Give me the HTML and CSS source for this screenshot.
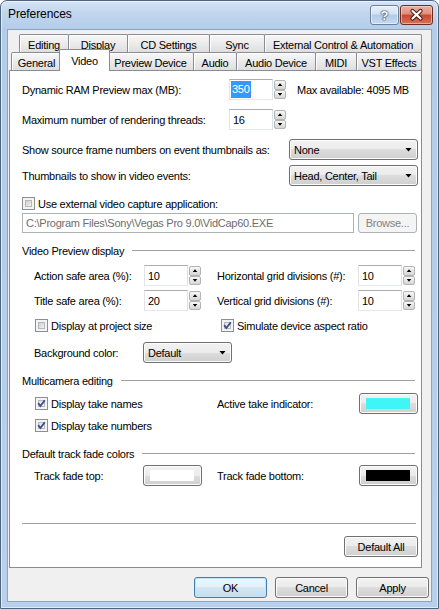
FILE: index.html
```html
<!DOCTYPE html>
<html>
<head>
<meta charset="utf-8">
<title>Preferences</title>
<link rel="stylesheet" href="styles.css">
</head>
<body>
<div class="window">
  <div class="titlebar">
    <span class="title">Preferences</span>
    <div class="caption">
      <div class="cap-btn help"><span>?</span></div>
      <div class="cap-btn close">
        <svg width="31" height="18" viewBox="0 0 31 18"><path d="M11.5 5 L19.5 12.5 M19.5 5 L11.5 12.5" stroke="#4b1610" stroke-width="4.2" stroke-linecap="round"/><path d="M11.5 5 L19.5 12.5 M19.5 5 L11.5 12.5" stroke="#fff" stroke-width="2.2" stroke-linecap="round"/></svg>
      </div>
    </div>
  </div>
  <div class="client">
    <div class="tabs">
      <div class="tabrow back">
        <div class="tab w-editing">Editing</div>
        <div class="tab w-display">Display</div>
        <div class="tab w-cd">CD Settings</div>
        <div class="tab w-sync">Sync</div>
        <div class="tab w-ext">External Control &amp; Automation</div>
      </div>
      <div class="tabrow front">
        <div class="tab w-general">General</div>
        <div class="tab sel w-video">Video</div>
        <div class="tab w-preview">Preview Device</div>
        <div class="tab w-audio">Audio</div>
        <div class="tab w-adev">Audio Device</div>
        <div class="tab w-midi">MIDI</div>
        <div class="tab w-vst">VST Effects</div>
      </div>
    </div>
    <div class="panel">
      <div class="row r1">
        <span class="lbl w207">Dynamic RAM Preview max (MB):</span>
        <div class="spinner"><div class="edit"><span class="hl">350</span></div><div class="spin"><div class="sb"><i class="up"></i></div><div class="sb"><i class="down"></i></div></div></div>
        <span class="maxav">Max available: 4095 MB</span>
      </div>
      <div class="row r2">
        <span class="lbl w207">Maximum number of rendering threads:</span>
        <div class="spinner"><div class="edit"><span class="val">16</span></div><div class="spin"><div class="sb"><i class="up"></i></div><div class="sb"><i class="down"></i></div></div></div>
      </div>
      <div class="row r3">
        <span class="lbl w267">Show source frame numbers on event thumbnails as:</span>
        <div class="combo w129"><span>None</span><i class="arrow"></i></div>
      </div>
      <div class="row r4">
        <span class="lbl w267">Thumbnails to show in video events:</span>
        <div class="combo w129"><span>Head, Center, Tail</span><i class="arrow"></i></div>
      </div>
      <div class="row cbrow r5">
        <span class="cb"><i></i></span><span>Use external video capture application:</span>
      </div>
      <div class="row r6">
        <div class="textfield">C:\Program Files\Sony\Vegas Pro 9.0\VidCap60.EXE</div>
        <div class="btn disabled browse">Browse...</div>
      </div>
      <div class="group r7">Video Preview display</div>
      <div class="row sub r8">
        <div class="half left"><span class="lbl w110">Action safe area (%):</span>
          <div class="spinner"><div class="edit"><span class="val">10</span></div><div class="spin"><div class="sb"><i class="up"></i></div><div class="sb"><i class="down"></i></div></div></div>
        </div>
        <div class="half right"><span class="lbl w141">Horizontal grid divisions (#):</span>
          <div class="spinner"><div class="edit"><span class="val">10</span></div><div class="spin"><div class="sb"><i class="up"></i></div><div class="sb"><i class="down"></i></div></div></div>
        </div>
      </div>
      <div class="row sub r9">
        <div class="half left"><span class="lbl w110">Title safe area (%):</span>
          <div class="spinner"><div class="edit"><span class="val">20</span></div><div class="spin"><div class="sb"><i class="up"></i></div><div class="sb"><i class="down"></i></div></div></div>
        </div>
        <div class="half right"><span class="lbl w141">Vertical grid divisions (#):</span>
          <div class="spinner"><div class="edit"><span class="val">10</span></div><div class="spin"><div class="sb"><i class="up"></i></div><div class="sb"><i class="down"></i></div></div></div>
        </div>
      </div>
      <div class="row sub cbrow r10">
        <div class="half left cbl"><span class="cb"><i></i></span><span>Display at project size</span></div>
        <div class="half right cbr"><span class="cb checked"><i></i><svg viewBox="0 0 13 13" width="13" height="13"><path d="M3.2 6.2 L5.4 9 L9.8 3.2" fill="none" stroke="#3d4f8c" stroke-width="1.9"/></svg></span><span>Simulate device aspect ratio</span></div>
      </div>
      <div class="row sub r11">
        <div class="half left"><span class="lbl w109">Background color:</span>
          <div class="combo w89"><span>Default</span><i class="arrow"></i></div>
        </div>
      </div>
      <div class="group r12">Multicamera editing</div>
      <div class="row sub r13">
        <div class="half left cbl"><span class="cb checked"><i></i><svg viewBox="0 0 13 13" width="13" height="13"><path d="M3.2 6.2 L5.4 9 L9.8 3.2" fill="none" stroke="#3d4f8c" stroke-width="1.9"/></svg></span><span>Display take names</span></div>
        <div class="half right"><span class="lbl w142">Active take indicator:</span>
          <div class="btn colorbtn"><i class="swatch cyan"></i></div>
        </div>
      </div>
      <div class="row sub cbrow r14">
        <div class="half left cbl"><span class="cb checked"><i></i><svg viewBox="0 0 13 13" width="13" height="13"><path d="M3.2 6.2 L5.4 9 L9.8 3.2" fill="none" stroke="#3d4f8c" stroke-width="1.9"/></svg></span><span>Display take numbers</span></div>
      </div>
      <div class="group r15">Default track fade colors</div>
      <div class="row sub r16">
        <div class="half left"><span class="lbl w109">Track fade top:</span>
          <div class="btn colorbtn"><i class="swatch white"></i></div>
        </div>
        <div class="half right"><span class="lbl w142">Track fade bottom:</span>
          <div class="btn colorbtn"><i class="swatch black"></i></div>
        </div>
      </div>
      <div class="sep"></div>
      <div class="row r18">
        <div class="btn defall">Default All</div>
      </div>
    </div>
    <div class="dlg-buttons">
      <div class="btn dlg default">OK</div>
      <div class="btn dlg">Cancel</div>
      <div class="btn dlg">Apply</div>
    </div>
  </div>
</div>
</body>
</html>
```

FILE: styles.css
```css
* { box-sizing: border-box; }
html, body { margin: 0; padding: 0; }
body {
  width: 439px; height: 609px; overflow: hidden; background: #fff;
  font-family: "Liberation Sans", Arial, sans-serif; font-size: 11px;
  letter-spacing: -0.25px; color: #000;
}
i { display: block; }

/* window frame */
.window {
  width: 439px; height: 609px;
  display: flex; flex-direction: column;
  border: 1px solid #4d6580;
  border-radius: 7px 7px 0 0;
  padding: 0 7px 7px;
  background: linear-gradient(180deg, #d5e4f5 0, #c1d6ee 12px, #b3cce9 29px, #b8d0eb 100%);
  box-shadow: inset 0 0 0 1px rgba(255,255,255,0.55);
}
.titlebar { height: 29px; flex: none; display: flex; justify-content: space-between; align-items: flex-start; }
.title { margin-top: 6px; font-size: 12px; letter-spacing: -0.1px; line-height: 14px; }
.caption { display: flex; gap: 1px; margin-top: 4px; margin-right: -2px; }
.cap-btn { height: 20px; border-radius: 3px; display: flex; align-items: center; justify-content: center; }
.help {
  width: 29px; border: 1px solid #6b7f9c;
  background: linear-gradient(180deg, #e7f0fa 0, #d3e2f2 45%, #b4cbe6 50%, #c7dbf0 100%);
  box-shadow: inset 0 0 0 1px rgba(255,255,255,0.5);
}
.help span {
  font-weight: bold; font-size: 13px; line-height: 1; color: #fff; letter-spacing: 0;
  text-shadow: 0 0 1px #2a4466, 0 0 1px #2a4466, 0 0 2px #2a4466;
}
.close {
  width: 33px; border: 1px solid #6f2a22;
  background: linear-gradient(180deg, #ebb0a1 0, #df8f7c 45%, #c8462f 50%, #d8735a 100%);
  box-shadow: inset 0 0 0 1px rgba(255,225,215,0.5);
}
.client {
  flex: 1; background: #f0f0f0; display: flex; flex-direction: column;
  box-shadow: 0 0 0 1px #8ba4c0;
}

/* tabs */
.tabs { margin: 4px 9px 0 1px; position: relative; z-index: 2; }
.tabrow { display: flex; height: 18px; }
.tabrow.back { padding-left: 10px; }
.tabrow.front { padding-left: 2px; }
.tab {
  height: 18px; flex: none; margin-left: -1px;
  border: 1px solid #898c95; border-bottom: none; border-radius: 2px 2px 0 0;
  background: linear-gradient(180deg, #f7f7f7 0, #ebebeb 50%, #dedede 100%);
  box-shadow: inset 1px 1px 0 #fff;
  display: flex; align-items: center; justify-content: center;
  padding-top: 2px; white-space: nowrap;
}
.tab:first-child { margin-left: 0; }
.tab.sel {
  height: 22px; margin: -3px -2px 0 -3px; padding-top: 0;
  background: #fff; box-shadow: none; position: relative; z-index: 3;
}
.w-editing { width: 50px; } .w-display { width: 60px; } .w-cd { width: 83px; }
.w-sync { width: 56px; } .w-ext { width: 158px; }
.w-general { width: 51px; } .w-video { width: 51px; } .w-preview { width: 87px; }
.w-audio { width: 44px; } .w-adev { width: 80px; } .w-midi { width: 42px; } .w-vst { width: 66px; }

/* panel */
.panel {
  margin: 0 9px 0 1px; border: 1px solid #898c95; background: #fff;
  padding: 0 3px 10px 12px;
}
.row { display: flex; align-items: center; height: 21px; }
.lbl { flex: none; white-space: nowrap; }
.w207 { width: 207px; } .w267 { width: 267px; } .w110 { width: 110px; }
.w109 { width: 109px; } .w141 { width: 141px; } .w142 { width: 142px; }

.r1 { margin-top: 8px; }
.r2 { margin-top: 9px; }
.r3 { margin-top: 9px; }
.r4 { margin-top: 5px; }
.r5 { margin-top: 11px; height: 13px; }
.r6 { margin-top: 3px; height: 20px; justify-content: space-between; }
.r7 { margin-top: 11px; }
.r8 { margin-top: 8px; }
.r9 { margin-top: 4px; }
.r10 { margin-top: 8px; height: 13px; }
.r11 { margin-top: 10px; }
.r12 { margin-top: 11px; }
.r13 { margin-top: 6px; }
.r14 { margin-top: 5px; height: 13px; }
.r15 { margin-top: 15px; }
.r16 { margin-top: 5px; }
.sep { margin-top: 37px; height: 1px; background: #a0a0a0; margin-right: 2px; }
.r18 { margin-top: 12px; justify-content: flex-end; }

.maxav { margin-left: 11px; white-space: nowrap; }

/* sub grid */
.sub { padding-left: 12px; }
.half { display: flex; align-items: center; height: 100%; }
.half.left { width: 183px; flex: none; }
.half.right { flex: 1; }
.cbl { padding-left: 1px; }
.cbr { padding-left: 4px; }

/* spinner */
.spinner { display: flex; flex: none; height: 21px; gap: 1px; }
.edit {
  width: 44px; height: 21px; background: #fff;
  border: 1px solid; border-color: #abadb3 #dbdfe6 #e3e9ef #e2e3ea;
  display: flex; align-items: center; padding-left: 1px;
}
.edit .hl { background: #3399ff; color: #fff; padding: 2px 1px; line-height: 13px; }
.edit .val { padding-left: 2px; }
.spin { width: 12px; display: flex; flex-direction: column; padding: 1px 0; }
.sb {
  flex: 1; border: 1px solid #b3b3b3; border-radius: 2px;
  background: linear-gradient(180deg, #f7f7f7 0, #e6e6e6 50%, #d5d5d5 100%);
  display: flex; align-items: center; justify-content: center;
}
.sb .up, .sb .down { width: 5px; height: 3px; background: #000; }
.sb .up { clip-path: polygon(50% 0, 100% 100%, 0 100%); }
.sb .down { clip-path: polygon(0 0, 100% 0, 50% 100%); }

/* combo + buttons */
.combo, .btn {
  height: 21px; flex: none; border: 1px solid #707070; border-radius: 3px;
  background: linear-gradient(180deg, #f2f2f2 0, #ebebeb 50%, #dddddd 50%, #cfcfcf 100%);
  box-shadow: inset 0 0 0 1px #fcfcfc;
  display: flex; align-items: center; white-space: nowrap;
}
.combo { justify-content: space-between; padding: 0 5px 0 4px; }
.w129 { width: 129px; } .w89 { width: 89px; }
.arrow { width: 7px; height: 4px; background: #000; clip-path: polygon(0 0, 100% 0, 50% 100%); }
.btn { justify-content: center; }
.btn.disabled { border-color: #adb2b5; background: #f4f4f4; box-shadow: none; color: #838383; }
.browse { width: 59px; height: 20px; margin-right: 1px; }
.textfield {
  width: 332px; height: 20px; background: #fff; color: #6d6d6d;
  border: 1px solid #adb2b5; padding: 0 3px; display: flex; align-items: center;
  white-space: nowrap; overflow: hidden;
}
.colorbtn { width: 59px; padding: 4px 7px 4px 6px; align-items: stretch; }
.swatch { flex: 1; }
.swatch.cyan { background: #3ff5f5; }
.swatch.white { background: #fff; }
.swatch.black { background: #000; }
.defall { width: 74px; }
.dlg-buttons { display: flex; justify-content: flex-end; gap: 8px; margin-top: 9px; padding-right: 2px; }
.dlg { width: 73px; }
.btn.default {
  border-color: #3c7fb1;
  box-shadow: inset 0 0 0 1px #c4e5f6;
  background: linear-gradient(180deg, #eaf6fd 0, #e4f1fa 50%, #d3e6f3 50%, #c6ddee 100%);
}

/* group headers */
.group { display: flex; align-items: center; height: 13px; white-space: nowrap; }
.group::after { content: ""; flex: 1; height: 1px; background: #a0a0a0; margin: 0 3px 0 8px; }

/* checkbox */
.cbrow > .cb, .half > .cb { margin-right: 3px; }
.cb {
  position: relative; width: 13px; height: 13px; flex: none;
  border: 1px solid #8e8f8f; background: #f4f4f4; padding: 2px;
}
.cb i {
  width: 7px; height: 7px; border: 1px solid #b5b9bf;
  background: linear-gradient(135deg, #c9cdd4, #f3f3f3);
}
.cb.checked i { background: linear-gradient(135deg, #dfe3e8, #fafafa); }
.cb svg { position: absolute; left: -1px; top: -1px; }
```
